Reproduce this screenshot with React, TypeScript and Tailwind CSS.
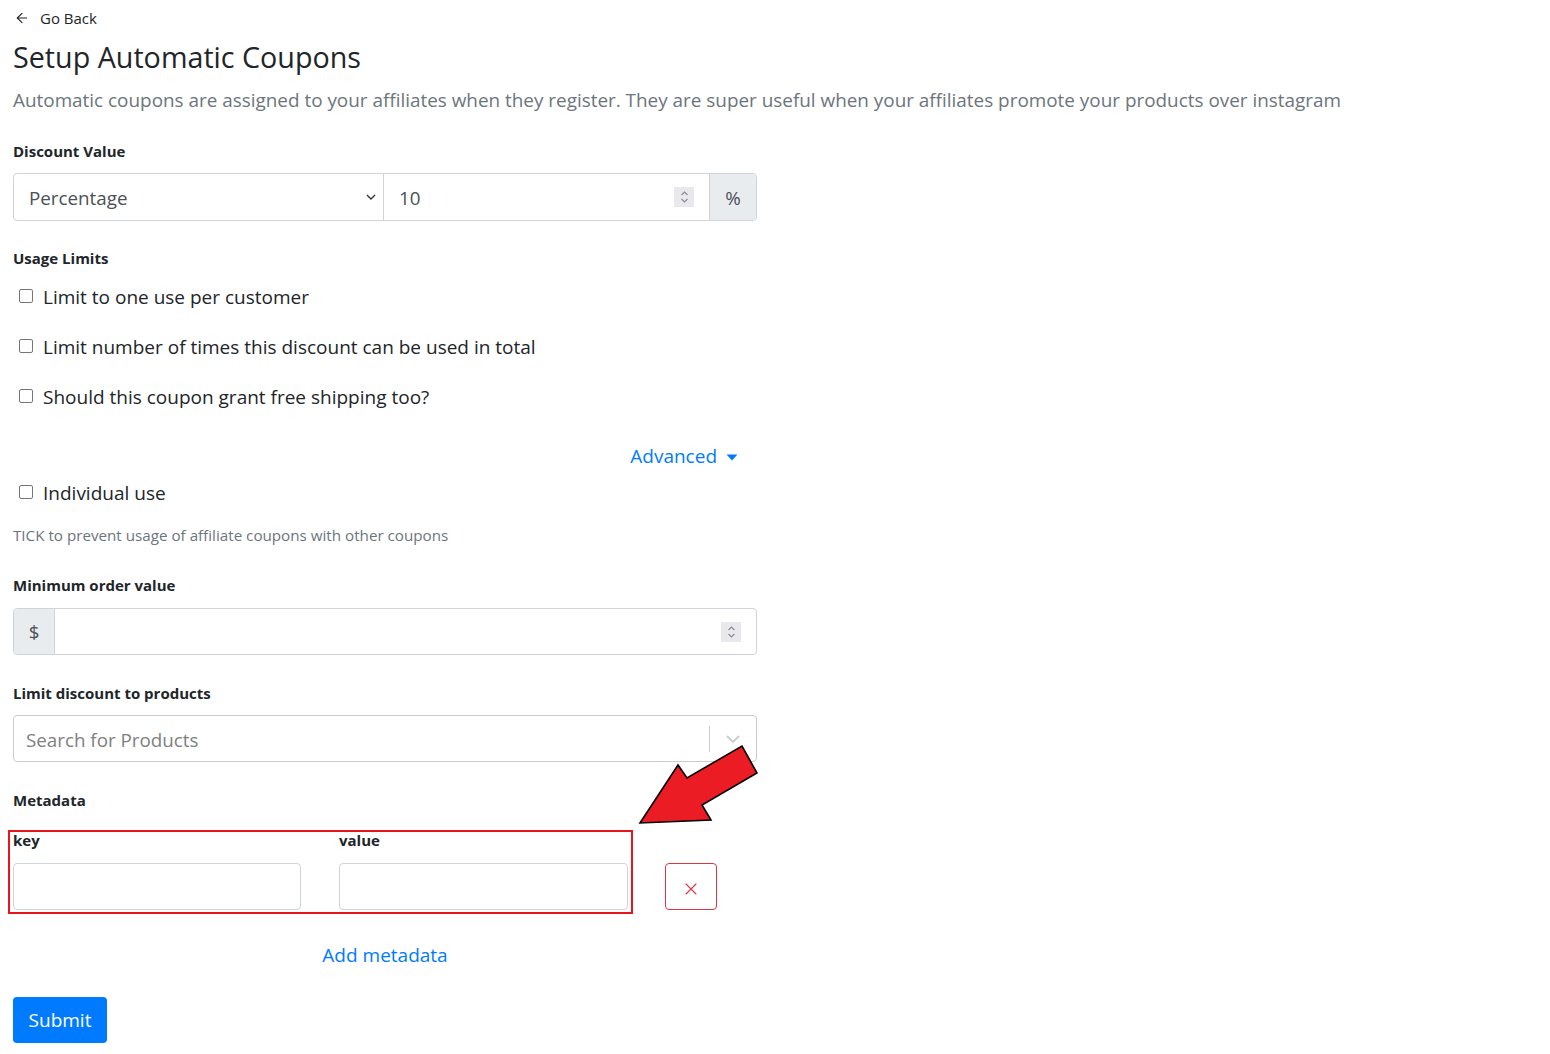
import { ArrowLeft, X } from 'lucide-react'

function Label({ children }: { children: React.ReactNode }) {
  return <div className="text-[15px] leading-[22px] font-bold text-[#212529]">{children}</div>
}

function Check({ label, className = '' }: { label: string; className?: string }) {
  return (
    <label className={`flex items-center h-[28px] ${className}`}>
      <span className="ml-[6px] w-[14px] h-[14px] rounded-[2px] border border-[#767676] bg-white -mt-[3px]" />
      <span className="ml-[10px] text-[19px] leading-[28px] text-[#212529]">{label}</span>
    </label>
  )
}

function Spinner() {
  return (
    <span className="flex flex-col items-center justify-center w-[20px] h-[20px] bg-[#e9e9ed]">
      <svg width="9" height="14" viewBox="0 0 9 14" fill="none" stroke="#8a8a8f" strokeWidth="1.1">
        <path d="M1.5 5 L4.5 2 L7.5 5" />
        <path d="M1.5 9 L4.5 12 L7.5 9" />
      </svg>
    </span>
  )
}

export default function App() {
  return (
    <div className="min-h-[1054px] bg-white pl-[13px] pt-[7px] text-[#212529]" style={{ fontFamily: '"Open Sans", "Noto Sans", sans-serif' }}>
      {/* Back link */}
      <div className="flex items-center h-[22px] text-[15px] text-[#212529]">
        <ArrowLeft className="ml-[1px] w-[16px] h-[16px]" strokeWidth={1.6} />
        <span className="ml-[10px]">Go Back</span>
      </div>

      <h1 className="mt-[10px] text-[28.7px] leading-[36px] font-normal">Setup Automatic Coupons</h1>
      <p className="mt-[11px] text-[18.9px] leading-[28px] text-[#6c757d]">
        Automatic coupons are assigned to your affiliates when they register. They are super useful when your affiliates promote your products over instagram
      </p>

      <div className="w-[744px]">
        {/* Discount value */}
        <div className="mt-[26px]">
          <Label>Discount Value</Label>
        </div>
        <div className="mt-[11px] flex h-[48px] border border-[#ced4da] rounded-[4px] text-[18.8px]">
          <div className="w-[370px] flex items-center justify-between pl-[15px] pr-[6px] border-r border-[#ced4da] text-[#495057]">
            <span className="pt-[3px]">Percentage</span>
            <svg width="12" height="8" viewBox="0 0 12 8" fill="none" stroke="#333" strokeWidth="1.4">
              <path d="M2 2 L6 6 L10 2" />
            </svg>
          </div>
          <div className="flex-1 flex items-center justify-between pl-[15px] pr-[15px] text-[#495057]">
            <span className="pt-[3px]">10</span>
            <Spinner />
          </div>
          <div className="w-[47px] flex items-center justify-center bg-[#e9ecef] border-l border-[#ced4da] text-[#495057] rounded-r-[4px] pt-[2px]">%</div>
        </div>

        {/* Usage limits */}
        <div className="mt-[26px]">
          <Label>Usage Limits</Label>
        </div>
        <Check className="mt-[14px]" label="Limit to one use per customer" />
        <Check className="mt-[22px]" label="Limit number of times this discount can be used in total" />
        <Check className="mt-[22px]" label="Should this coupon grant free shipping too?" />

        <div className="mt-[31px] flex justify-end pr-[19px]">
          <button className="flex items-center text-[19px] leading-[28px] text-[#007bff]">
            Advanced
            <svg className="ml-[9px] mt-[3px]" width="12" height="7" viewBox="0 0 12 7" fill="#007bff">
              <path d="M0.5 0.5 H11.5 L6 6.5 Z" />
            </svg>
          </button>
        </div>

        <Check className="mt-[9px]" label="Individual use" />
        <p className="mt-[17px] text-[15.2px] leading-[22px] text-[#6c757d]">TICK to prevent usage of affiliate coupons with other coupons</p>

        {/* Minimum order */}
        <div className="mt-[28px]">
          <Label>Minimum order value</Label>
        </div>
        <div className="mt-[12px] flex h-[47px] border border-[#ced4da] rounded-[4px] text-[18.8px]">
          <div className="w-[41px] flex items-center justify-center bg-[#e9ecef] border-r border-[#ced4da] text-[#495057] rounded-l-[4px] pt-[2px]">$</div>
          <div className="flex-1 flex items-center justify-end pr-[15px]">
            <Spinner />
          </div>
        </div>

        {/* Products */}
        <div className="mt-[27px]">
          <Label>Limit discount to products</Label>
        </div>
        <div className="mt-[11px] flex h-[47px] border border-[#cccccc] rounded-[4px] text-[18.8px]">
          <div className="flex-1 flex items-center pl-[12px] pt-[3px] text-[#808080]">Search for Products</div>
          <div className="flex items-center">
            <span className="w-px h-[26px] bg-[#cccccc]" />
            <svg className="mx-[14px]" width="18" height="12" viewBox="0 0 18 12" fill="none" stroke="#cccccc" strokeWidth="1.8">
              <path d="M3 3 L9 9 L15 3" />
            </svg>
          </div>
        </div>

        {/* Metadata */}
        <div className="mt-[27px]">
          <Label>Metadata</Label>
        </div>
        <div className="relative mt-[18px] flex items-end">
          <div className="w-[288px]">
            <Label>key</Label>
            <div className="mt-[12px] h-[47px] border border-[#ced4da] rounded-[4px]" />
          </div>
          <div className="ml-[38px] w-[289px]">
            <Label>value</Label>
            <div className="mt-[12px] h-[47px] border border-[#ced4da] rounded-[4px]" />
          </div>
          <button className="ml-[37px] w-[52px] h-[47px] flex items-center justify-center border border-[#dc3545] rounded-[4px] text-[#dc3545]">
            <X className="w-[20px] h-[20px] mt-[4px]" strokeWidth={1.3} />
          </button>

          {/* annotation */}
          <div className="absolute left-[-5px] top-[1px] w-[625px] h-[84px] border-2 border-[#e8151d] pointer-events-none" />
          <svg className="absolute left-[617px] top-[-89px]" width="140" height="95" viewBox="0 0 140 95">
            <polygon points="10,83 48,25 57,38 112,6 127,33 72,65 81,80" fill="#ec1c24" stroke="#000" strokeWidth="1.6" strokeLinejoin="miter" />
          </svg>
        </div>

        <div className="mt-[31px] flex justify-center">
          <button className="text-[19px] leading-[28px] text-[#007bff]">Add metadata</button>
        </div>

        <button className="mt-[28px] h-[46px] w-[94px] rounded-[4px] bg-[#007bff] text-white text-[19px]">Submit</button>
      </div>
    </div>
  )
}
